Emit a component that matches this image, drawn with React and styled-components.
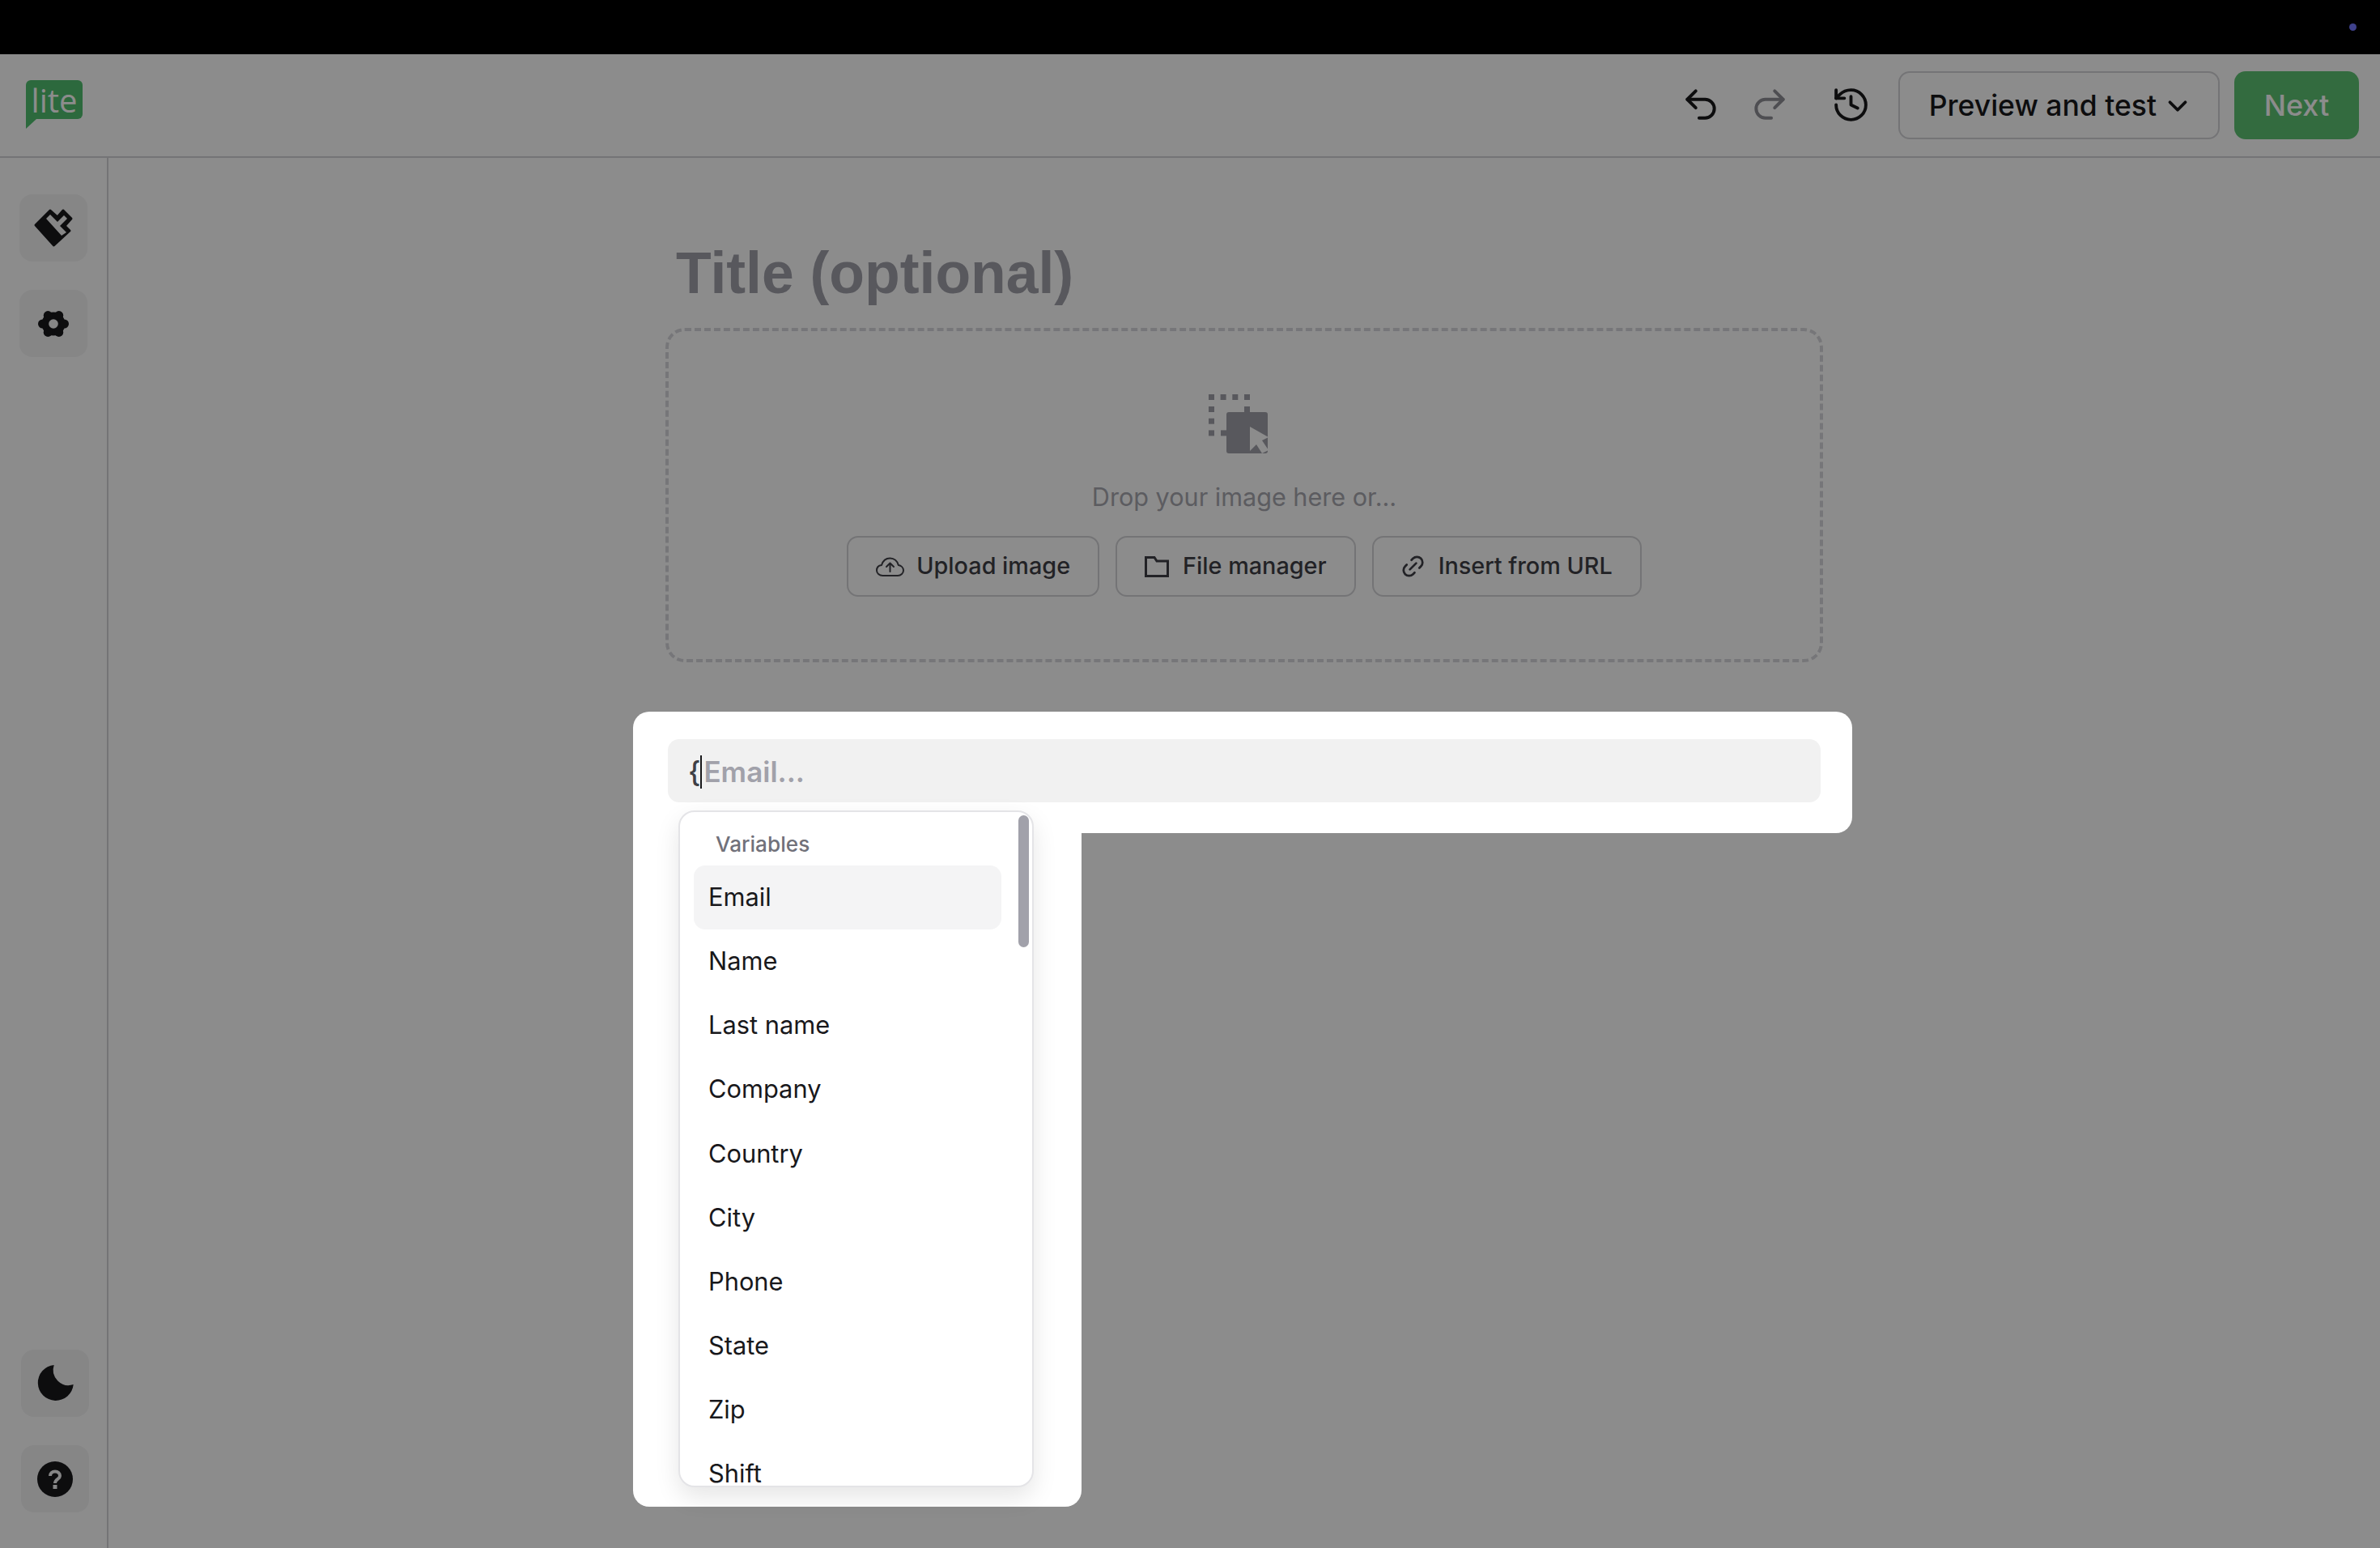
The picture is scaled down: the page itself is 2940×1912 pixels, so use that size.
import React from "react";
import styled, { createGlobalStyle } from "styled-components";
import { Undo2, Redo2, History, ChevronDown, Link2 } from "lucide-react";

const Global = createGlobalStyle`
  html, body { margin: 0; padding: 0; background: #fff; }
  body { width: 2940px; height: 1912px; overflow: hidden; font-family: Inter, "Liberation Sans", sans-serif; }
  * { box-sizing: border-box; }
`;

const Page = styled.div`
  position: relative;
  width: 2940px;
  height: 1912px;
  display: flex;
  flex-direction: column;
  background: #fff;
  color: #18181b;
  overflow: hidden;
`;

const TopBar = styled.div`
  position: relative;
  flex: 0 0 67px;
  background: #000;
`;

const StatusDot = styled.span`
  position: absolute;
  left: 2902px;
  top: 29px;
  width: 9px;
  height: 9px;
  border-radius: 50%;
  background: #7378ff;
`;

const Header = styled.header`
  flex: 0 0 128px;
  display: flex;
  align-items: center;
  justify-content: space-between;
  padding: 0 26px 0 32px;
  border-bottom: 2px solid #d4d4d8;
`;

const Logo = styled.div`
  position: relative;
  width: 70px;
  height: 48px;
  margin-bottom: 14px;
  padding-top: 2px;
  display: flex;
  align-items: center;
  justify-content: center;
  border-radius: 6px 6px 6px 0;
  background: #50c070;
  color: #fff;
  font-family: "Open Sans", sans-serif;
  font-size: 40px;
  line-height: 1;
  &::after {
    content: "";
    position: absolute;
    left: 0;
    top: 48px;
    border-top: 12px solid #50c070;
    border-right: 13px solid transparent;
  }
`;

const HeaderActions = styled.div`
  display: flex;
  align-items: center;
`;

const IconButton = styled.button`
  display: flex;
  align-items: center;
  justify-content: center;
  padding: 0;
  margin: 0 0 2px ${(p) => p.$gap || 0}px;
  border: 0;
  background: none;
  color: ${(p) => (p.$muted ? "#8f8f96" : "#18181b")};
`;

const PreviewButton = styled.button`
  display: flex;
  align-items: center;
  height: 84px;
  margin-left: 34px;
  padding: 1px 31px 0 36px;
  border: 2px solid #d4d4d8;
  border-radius: 14px;
  background: #fff;
  color: #18181b;
  font: 500 35.5px/1 Inter, sans-serif;
`;

const PreviewChevron = styled(ChevronDown)`
  margin-left: 7px;
`;

const NextButton = styled.button`
  width: 154px;
  height: 84px;
  margin-left: 18px;
  border: 0;
  border-radius: 14px;
  background: #5dc373;
  color: #fff;
  font: 500 36px/1 Inter, sans-serif;
`;

const Body = styled.div`
  flex: 1;
  display: flex;
  min-height: 0;
`;

const Sidebar = styled.aside`
  flex: 0 0 134px;
  display: flex;
  flex-direction: column;
  justify-content: space-between;
  padding: 45px 0 44px 24px;
  border-right: 2px solid #d4d4d8;
`;

const SideGroup = styled.div`
  display: flex;
  flex-direction: column;
  gap: 35px;
  padding-left: ${(p) => p.$inset || 0}px;
`;

const SideButton = styled.button`
  width: 84px;
  height: 83px;
  display: flex;
  align-items: center;
  justify-content: center;
  padding: 0;
  border: 0;
  border-radius: 16px;
  background: #f4f4f5;
`;

const Main = styled.main`
  flex: 1;
  display: flex;
  justify-content: center;
  padding-top: 102px;
`;

const Column = styled.div`
  width: 1430px;
`;

const Title = styled.h1`
  margin: 0 0 28px;
  padding-left: 13px;
  color: #a1a1aa;
  font: 700 71.5px/80px "Liberation Sans", Arial, sans-serif;
`;

const DropZone = styled.div`
  height: 413px;
  display: flex;
  flex-direction: column;
  align-items: center;
  padding-top: 68px;
  border: 4px dashed #d8d8dc;
  border-radius: 24px;
`;

const DropGlyph = styled.svg`
  margin-right: 14px;
  flex: none;
`;

const DropHint = styled.p`
  margin: 18px 0 24px;
  color: #a8a8b0;
  font: 400 30.6px/48px Inter, sans-serif;
`;

const DropActions = styled.div`
  display: flex;
  gap: 20px;
`;

const OutlineButton = styled.button`
  display: flex;
  align-items: center;
  gap: ${(p) => p.$gap || 15}px;
  height: 75px;
  padding: 0 34px;
  border: 2px solid #d4d4d8;
  border-radius: 14px;
  background: #fff;
  color: #3f3f46;
  font: 500 28.8px/1 Inter, sans-serif;
`;

const TiltedLink = styled(Link2)`
  transform: rotate(-45deg);
  margin: 0 -2px;
`;

const Backdrop = styled.div`
  position: absolute;
  inset: 0;
  display: flex;
  flex-direction: column;
  align-items: flex-start;
  padding: 879px 0 0 782px;
  background: rgba(0, 0, 0, 0.45);
`;

const Modal = styled.div`
  position: relative;
`;

const InputCard = styled.div`
  width: 1506px;
  height: 150px;
  padding: 34px 39px 0 43px;
  border-radius: 20px 20px 20px 0;
  background: #fff;
`;

const InputShell = styled.div`
  height: 78px;
  display: flex;
  align-items: center;
  padding: 2px 0 0 25px;
  border-radius: 14px;
  background: #f1f1f1;
  font: 600 35px/1 Inter, sans-serif;
`;

const Brace = styled.span`
  color: #3f3f46;
  font-weight: 500;
`;

const Caret = styled.span`
  width: 2px;
  height: 41px;
  margin: 0 2px 0 0;
  background: #18181b;
`;

const Placeholder = styled.span`
  color: #a1a1aa;
`;

const MenuSheet = styled.div`
  width: 554px;
  height: 832px;
  border-radius: 0 0 20px 20px;
  background: #fff;
`;

const Menu = styled.div`
  position: absolute;
  left: 56px;
  top: 122px;
  width: 439px;
  height: 836px;
  padding: 14px 0 0 17px;
  border: 2px solid #e4e4e7;
  border-radius: 20px;
  background: #fff;
  box-shadow: 0 12px 30px rgba(0, 0, 0, 0.1);
  overflow: hidden;
`;

const MenuLabel = styled.div`
  height: 52px;
  display: flex;
  align-items: center;
  padding-left: 27px;
  color: #71717a;
  font: 500 26.2px/1 Inter, sans-serif;
`;

const MenuItem = styled.div`
  width: 380px;
  height: 79.1px;
  flex: none;
  display: flex;
  align-items: center;
  padding-left: 18px;
  border-radius: 14px;
  background: ${(p) => (p.$active ? "#f4f4f5" : "transparent")};
  color: #18181b;
  font: 400 30.8px/1 Inter, sans-serif;
`;

const ScrollThumb = styled.div`
  position: absolute;
  right: 4px;
  top: 4px;
  width: 13px;
  height: 163px;
  border-radius: 7px;
  background: #a1a1aa;
`;

const BrushIcon = () => (
  <svg width="70" height="64" viewBox="2 0 70 64">
    <path
      d="M15 28 33 10 42 18 49 10 59 20 51 29 57 35 37.5 53Z"
      fill="#18181b"
      stroke="#18181b"
      strokeWidth="3"
      strokeLinejoin="round"
    />
    <path d="M28 20 33 15 42 24 50 16 54 20 45 29 53 37 47 41Z" fill="#f4f4f5" />
  </svg>
);

const GearIcon = () => (
  <svg width="44" height="44" viewBox="0 0 44 44">
    <circle cx="22" cy="22" r="14.5" fill="#18181b" />
    {[0, 60, 120, 180, 240, 300].map((a) => (
      <circle
        key={a}
        cx={22 + 13.5 * Math.cos((a * Math.PI) / 180)}
        cy={22 + 12 * Math.sin((a * Math.PI) / 180)}
        r="5.5"
        fill="#18181b"
      />
    ))}
    <circle cx="22" cy="22" r="5.8" fill="#f4f4f5" />
  </svg>
);

const MoonIcon = () => (
  <svg width="48" height="48" viewBox="0 0 48 48">
    <path d="M22.7 1A22 22 0 1 0 46.7 25 19 19 0 0 1 22.7 1Z" fill="#18181b" />
  </svg>
);

const HelpIcon = () => (
  <svg width="48" height="48" viewBox="0 0 48 48">
    <circle cx="24" cy="24" r="22" fill="#18181b" />
    <path
      d="M18 20C18 16.5 20.5 14.5 24 14.5S30 16.5 30 20C30 24 24 24 24 29"
      fill="none"
      stroke="#f4f4f5"
      strokeWidth="4"
    />
    <rect x="21.5" y="31" width="5" height="5" fill="#f4f4f5" />
  </svg>
);

const DropIcon = () => (
  <DropGlyph width="100" height="95" viewBox="0 0 100 95">
    <g fill="#a1a1aa">
      {[13, 27.6, 42.3, 57].map((x) => (
        <rect key={x} x={x} y="10" width="7" height="7" />
      ))}
      {[25, 39.7, 54.4].map((y) => (
        <rect key={y} x="13" y={y} width="7" height="7" />
      ))}
      <rect x="57" y="25" width="7" height="8" />
      <rect x="28" y="54.4" width="8" height="7" />
      <rect x="35" y="32" width="51" height="51" rx="3" />
    </g>
    <path d="M64 50 87 63 79 67 87 79 79 83 72 72 64 80Z" fill="#fff" />
  </DropGlyph>
);

const CloudIcon = () => (
  <svg width="35" height="24" viewBox="0 0 35 24" fill="none" stroke="currentColor" strokeWidth="2" strokeLinecap="round" strokeLinejoin="round">
    <path d="M8.5 23C4 23 1 20 1 16.5 1 13 3.5 10.5 7 10 8.5 5 12.5 1.5 17.5 1.5 22.5 1.5 26.5 5 27.8 10 31 10.5 34 13 34 16.5 34 20 31 23 27 23Z" />
    <path d="M17.5 18V8M13 12l4.5-4.5L22 12" />
  </svg>
);

const FolderIcon = () => (
  <svg width="30" height="26" viewBox="0 0 30 26" fill="none" stroke="currentColor" strokeWidth="3">
    <path d="M1.5 1.5H12L15 6H28.5V24.5H1.5Z" />
  </svg>
);

const variables = ["Email", "Name", "Last name", "Company", "Country", "City", "Phone", "State", "Zip", "Shift"];

export default function App() {
  return (
    <Page>
      <Global />
      <TopBar>
        <StatusDot />
      </TopBar>
      <Header>
        <Logo>lite</Logo>
        <HeaderActions>
          <IconButton aria-label="Undo">
            <Undo2 size={50} strokeWidth={1.9} />
          </IconButton>
          <IconButton aria-label="Redo" $muted $gap={35}>
            <Redo2 size={50} strokeWidth={1.9} />
          </IconButton>
          <IconButton aria-label="History" $gap={51}>
            <History size={49} strokeWidth={1.9} />
          </IconButton>
          <PreviewButton>
            Preview and test
            <PreviewChevron size={38} strokeWidth={2.4} />
          </PreviewButton>
          <NextButton>Next</NextButton>
        </HeaderActions>
      </Header>
      <Body>
        <Sidebar>
          <SideGroup>
            <SideButton aria-label="Style">
              <BrushIcon />
            </SideButton>
            <SideButton aria-label="Settings">
              <GearIcon />
            </SideButton>
          </SideGroup>
          <SideGroup $inset={2}>
            <SideButton aria-label="Dark mode">
              <MoonIcon />
            </SideButton>
            <SideButton aria-label="Help">
              <HelpIcon />
            </SideButton>
          </SideGroup>
        </Sidebar>
        <Main>
          <Column>
            <Title>Title (optional)</Title>
            <DropZone>
              <DropIcon />
              <DropHint>Drop your image here or...</DropHint>
              <DropActions>
                <OutlineButton>
                  <CloudIcon />
                  Upload image
                </OutlineButton>
                <OutlineButton $gap={17}>
                  <FolderIcon />
                  File manager
                </OutlineButton>
                <OutlineButton $gap={17}>
                  <TiltedLink size={33} strokeWidth={2} />
                  Insert from URL
                </OutlineButton>
              </DropActions>
            </DropZone>
          </Column>
        </Main>
      </Body>
      <Backdrop>
        <Modal>
          <InputCard>
            <InputShell>
              <Brace>{"{"}</Brace>
              <Caret />
              <Placeholder>Email...</Placeholder>
            </InputShell>
          </InputCard>
          <MenuSheet />
          <Menu>
            <MenuLabel>Variables</MenuLabel>
            {variables.map((v, i) => (
              <MenuItem key={v} $active={i === 0}>
                {v}
              </MenuItem>
            ))}
            <ScrollThumb />
          </Menu>
        </Modal>
      </Backdrop>
    </Page>
  );
}
